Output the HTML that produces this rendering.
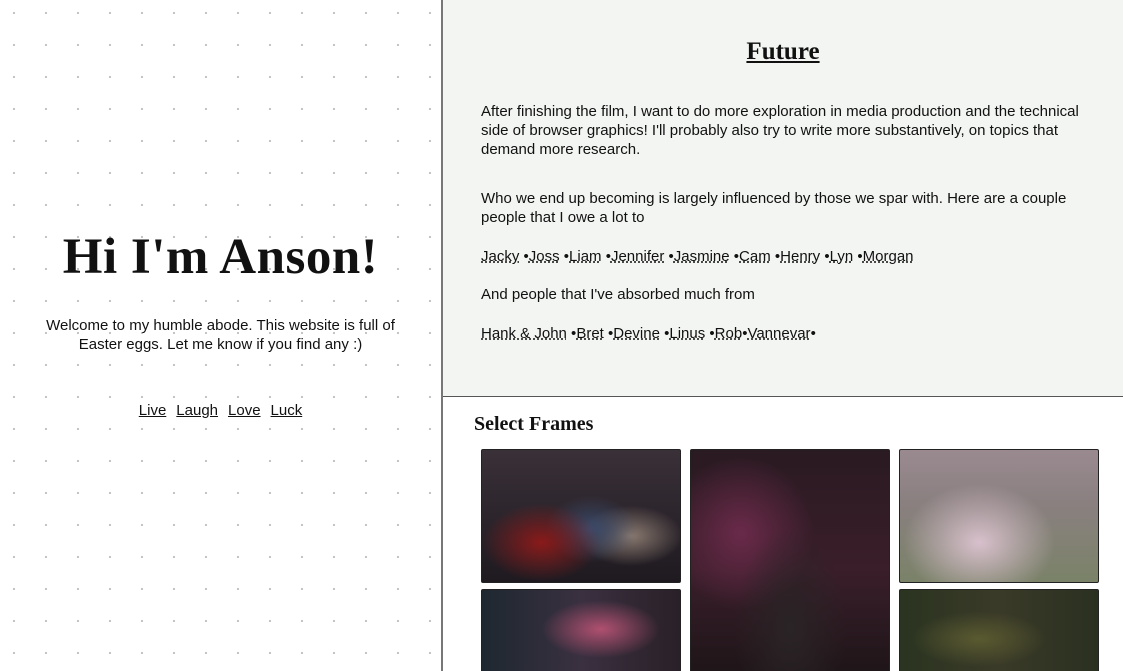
<!DOCTYPE html>
<html><head><meta charset="utf-8"><style>
*{margin:0;padding:0;box-sizing:border-box}
html,body{width:1123px;height:671px;overflow:hidden;background:#fff;font-family:"Liberation Sans",sans-serif;color:#111}
#wrap{position:relative;width:1123px;height:671px;overflow:hidden}
#left{position:absolute;left:0;top:0;width:441px;height:671px;background-image:radial-gradient(circle,#bdbdbd 0.9px,transparent 1.3px);background-size:32px 32px;background-position:-2px -3px}
#vline{position:absolute;left:441px;top:0;width:2px;height:671px;background:#777}
h1{position:absolute;left:0;width:441px;top:228px;text-align:center;font-family:"Liberation Serif",serif;font-size:51px;font-weight:bold;letter-spacing:0.5px}
.welcome{position:absolute;left:40px;width:361px;top:316px;text-align:center;font-size:15px;line-height:19px}
.links{position:absolute;left:0;width:441px;top:402px;text-align:center;font-size:15px}
.links span{text-decoration:underline;margin:0 5px}
#top{position:absolute;left:443px;top:0;width:680px;height:396px;background:#f2f5f1}
#hline{position:absolute;left:443px;top:396px;width:680px;height:1px;background:#555}
h2{position:absolute;left:443px;width:680px;top:38px;text-align:center;font-family:"Liberation Serif",serif;font-size:25px;font-weight:bold;text-decoration:underline}
.p{position:absolute;left:481px;width:610px;font-size:15px;line-height:19px}
.p u{text-decoration:underline dotted}
h3{position:absolute;left:474px;top:413px;font-family:"Liberation Serif",serif;font-size:20px;font-weight:bold}
.img{position:absolute;border:1px solid #222;border-radius:2px;width:200px}
</style></head><body><div id="wrap">
<div id="left"></div>
<div id="vline"></div>
<h1>Hi I'm Anson!</h1>
<div class="welcome">Welcome to my humble abode. This website is full of Easter eggs. Let me know if you find any :)</div>
<div class="links"><span>Live</span><span>Laugh</span><span>Love</span><span>Luck</span></div>
<div id="top"></div>
<div id="hline"></div>
<h2>Future</h2>
<div class="p" style="top:102px">After finishing the film, I want to do more exploration in media production and the technical side of browser graphics! I'll probably also try to write more substantively, on topics that demand more research.</div>
<div class="p" style="top:189px">Who we end up becoming is largely influenced by those we spar with. Here are a couple people that I owe a lot to</div>
<div class="p" style="top:247px"><u>Jacky</u> •<u>Joss</u> •<u>Liam</u> •<u>Jennifer</u> •<u>Jasmine</u> •<u>Cam</u> •<u>Henry</u> •<u>Lyn</u> •<u>Morgan</u></div>
<div class="p" style="top:285px">And people that I've absorbed much from</div>
<div class="p" style="top:324px"><u>Hank &amp; John</u> •<u>Bret</u> •<u>Devine</u> •<u>Linus</u> •<u>Rob</u>•<u>Vannevar</u>•</div>
<h3>Select Frames</h3>
<div class="img" style="left:481px;top:449px;height:134px;background:radial-gradient(ellipse at 30% 70%,#8a1a1a 0,transparent 30%),radial-gradient(ellipse at 55% 60%,#3a4a6a 0,transparent 30%),radial-gradient(ellipse at 75% 65%,#8a7a70 0,transparent 25%),linear-gradient(#3a3038,#1e1a20)"></div>
<div class="img" style="left:690px;top:449px;height:240px;background:radial-gradient(ellipse at 50% 75%,#2a2426 0,transparent 40%),radial-gradient(ellipse at 25% 35%,#6a2a4a 0,transparent 35%),linear-gradient(#2a1a22,#3a1e2a 50%,#1a1416)"></div>
<div class="img" style="left:899px;top:449px;height:134px;background:radial-gradient(ellipse at 40% 70%,#d8c0cc 0,transparent 45%),linear-gradient(#9a8a90,#8a8080 40%,#7a8268)"></div>
<div class="img" style="left:481px;top:589px;height:100px;background:radial-gradient(ellipse at 60% 40%,#b05070 0,transparent 35%),linear-gradient(90deg,#1e2830,#3a3040 50%,#2a2028)"></div>
<div class="img" style="left:899px;top:589px;height:100px;background:radial-gradient(ellipse at 40% 50%,#5a5a30 0,transparent 40%),linear-gradient(90deg,#2a3420,#3a3a28 50%,#2a3020)"></div>
</div></body></html>
